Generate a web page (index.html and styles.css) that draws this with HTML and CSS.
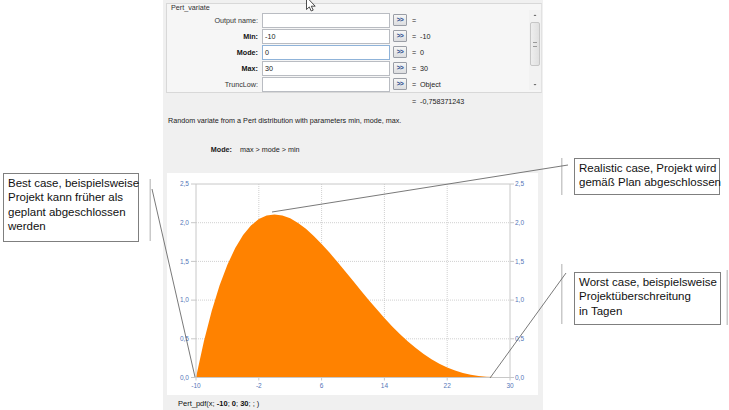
FILE: index.html
```html
<!DOCTYPE html>
<html lang="de">
<head>
<meta charset="utf-8">
<title>Pert_variate</title>
<link rel="stylesheet" href="styles.css">
</head>
<body>
<div class="page">
  <div class="panel">
    <div class="group">
      <div class="fields">
        <div class="group-title">Pert_variate</div>
        <div class="row"><span class="lbl">Output name:</span><span class="inp"></span><span class="btn">&gt;&gt;</span><span class="eq">=</span><span class="val"></span></div>
        <div class="row"><span class="lbl b">Min:</span><span class="inp">-10</span><span class="btn">&gt;&gt;</span><span class="eq">=</span><span class="val">-10</span></div>
        <div class="row"><span class="lbl b">Mode:</span><span class="inp focus">0</span><span class="btn">&gt;&gt;</span><span class="eq">=</span><span class="val">0</span></div>
        <div class="row"><span class="lbl b">Max:</span><span class="inp">30</span><span class="btn">&gt;&gt;</span><span class="eq">=</span><span class="val">30</span></div>
        <div class="row"><span class="lbl">TruncLow:</span><span class="inp"></span><span class="btn">&gt;&gt;</span><span class="eq">=</span><span class="val">Object</span></div>
      </div>
      <div class="scrollbar">
        <svg class="sb-arrow" width="12" height="10" viewBox="0 0 12 10"><path d="M4.5 6 L6 4.5 L7.5 6 Z" fill="#606060"/></svg>
        <div class="sb-thumb"><span class="grip"></span></div>
        <svg class="sb-arrow down" width="12" height="10" viewBox="0 0 12 10"><path d="M4.5 4 L6 5.5 L7.5 4 Z" fill="#606060"/></svg>
      </div>
    </div>
    <div class="result"><span class="eq">=</span><span>-0,758371243</span></div>
    <div class="desc">Random variate from a Pert distribution with parameters min, mode, max.</div>
    <div class="mode-row"><span class="mode-lbl">Mode:</span><span>max &gt; mode &gt; min</span></div>
    <div class="chart">
      <svg width="371" height="222" viewBox="0 0 371 222">
        <g class="grid">
          <line x1="91.8" y1="11" x2="91.8" y2="204.5"/>
          <line x1="154.6" y1="11" x2="154.6" y2="204.5"/>
          <line x1="217.4" y1="11" x2="217.4" y2="204.5"/>
          <line x1="280.2" y1="11" x2="280.2" y2="204.5"/>
          <line x1="29" y1="165.8" x2="343" y2="165.8"/>
          <line x1="29" y1="127.1" x2="343" y2="127.1"/>
          <line x1="29" y1="88.4" x2="343" y2="88.4"/>
          <line x1="29" y1="49.7" x2="343" y2="49.7"/>
        </g>
        <polygon class="area" points="29,204.5 36.85,168.5 44.7,138.1 52.55,112.6 60.4,91.7 68.25,75 76.1,62 83.95,52.5 91.8,46.1 99.65,42.5 107.5,41.4 115.35,42.4 123.2,45.3 131.05,49.9 138.9,55.8 146.75,62.9 154.6,70.9 162.45,79.6 170.3,88.7 178.15,98.2 186,107.8 193.85,117.4 201.7,126.9 209.55,136.1 217.4,145 225.25,153.4 233.1,161.2 240.95,168.5 248.8,175.1 256.65,181 264.5,186.2 272.35,190.7 280.2,194.4 288.05,197.5 295.9,199.9 303.75,201.7 311.6,202.9 319.45,203.7 327.3,204.1 335.15,204.4 343,204.5"/>
        <g class="axis">
          <line x1="29" y1="11" x2="343" y2="11"/>
          <line x1="29" y1="11" x2="29" y2="204.5"/>
          <line x1="343" y1="11" x2="343" y2="204.5"/>
          <line x1="29" y1="204.5" x2="343" y2="204.5"/>
        </g>
        <g class="ticks">
          <line x1="24" y1="11" x2="29" y2="11"/><line x1="24" y1="49.7" x2="29" y2="49.7"/><line x1="24" y1="88.4" x2="29" y2="88.4"/><line x1="24" y1="127.1" x2="29" y2="127.1"/><line x1="24" y1="165.8" x2="29" y2="165.8"/><line x1="24" y1="204.5" x2="29" y2="204.5"/>
          <line x1="343" y1="11" x2="347" y2="11"/><line x1="343" y1="49.7" x2="347" y2="49.7"/><line x1="343" y1="88.4" x2="347" y2="88.4"/><line x1="343" y1="127.1" x2="347" y2="127.1"/><line x1="343" y1="165.8" x2="347" y2="165.8"/><line x1="343" y1="204.5" x2="347" y2="204.5"/>
          <line x1="29" y1="204.5" x2="29" y2="207.5"/><line x1="91.8" y1="204.5" x2="91.8" y2="207.5"/><line x1="154.6" y1="204.5" x2="154.6" y2="207.5"/><line x1="217.4" y1="204.5" x2="217.4" y2="207.5"/><line x1="280.2" y1="204.5" x2="280.2" y2="207.5"/><line x1="343" y1="204.5" x2="343" y2="207.5"/>
        </g>
        <g class="ylab-l">
          <text x="22" y="13.3">2,5</text><text x="22" y="52">2,0</text><text x="22" y="90.7">1,5</text><text x="22" y="129.4">1,0</text><text x="22" y="168.1">0,5</text><text x="22" y="206.8">0,0</text>
        </g>
        <g class="ylab-r">
          <text x="348" y="13.3">2,5</text><text x="348" y="52">2,0</text><text x="348" y="90.7">1,5</text><text x="348" y="129.4">1,0</text><text x="348" y="168.1">0,5</text><text x="348" y="206.8">0,0</text>
        </g>
        <g class="xlab">
          <text x="29" y="214.5">-10</text><text x="91.8" y="214.5">-2</text><text x="154.6" y="214.5">6</text><text x="217.4" y="214.5">14</text><text x="280.2" y="214.5">22</text><text x="343" y="214.5">30</text>
        </g>
      </svg>
    </div>
    <div class="footer">Pert_pdf(x; <b>-10</b>; <b>0</b>; <b>30</b>; ; )</div>
  </div>
</div>

<svg class="overlay" width="729" height="410" viewBox="0 0 729 410">
  <rect class="bar" x="149.5" y="179" width="1.5" height="62"/>
  <rect class="bar" x="561" y="158" width="1.5" height="37"/>
  <rect class="bar" x="561" y="264" width="1.5" height="60"/>
  <rect class="bar" x="726.5" y="270" width="1.5" height="55"/>
  <line class="lead" x1="152" y1="189" x2="195" y2="377"/>
  <line class="lead" x1="568" y1="165" x2="272" y2="212"/>
  <line class="lead" x1="490" y1="378" x2="566" y2="273"/>
  <path class="cursor" d="M306.5 -3 L306.5 9.5 L309.3 6.9 L311.2 11 L313.2 10.1 L311.3 6.2 L315.2 6.2 Z"/>
</svg>

<div class="callout c1">Best case, beispielsweise<br>Projekt kann früher als<br>geplant abgeschlossen<br>werden</div>
<div class="callout c2">Realistic case, Projekt wird<br>gemäß Plan abgeschlossen</div>
<div class="callout c3">Worst case, beispielsweise<br>Projektüberschreitung<br>in Tagen</div>
</body>
</html>
```

FILE: styles.css
```css
html, body {
  margin: 0;
  padding: 0;
  background: #ffffff;
}
body {
  width: 729px;
  height: 410px;
  overflow: hidden;
  position: relative;
  font-family: "Liberation Sans", Arial, sans-serif;
}
.page {
  display: flex;
  height: 410px;
}
.panel {
  margin-left: 163px;
  width: 380px;
  height: 410px;
  background: #f0f0f0;
  display: flex;
  flex-direction: column;
  font-size: 7.2px;
  color: #1a1a1a;
}
.group {
  margin: 3px 1px 0 3px;
  height: 90px;
  box-sizing: border-box;
  border: 1px solid #d8d8d8;
  border-right-color: #e2e2e2;
  background: #f6f6f6;
  display: flex;
}
.fields {
  flex: 1;
  display: flex;
  flex-direction: column;
}
.group-title {
  height: 8px;
  line-height: 8px;
  padding-left: 4px;
  color: #303030;
}
.row {
  height: 16px;
  display: flex;
  align-items: center;
}
.lbl {
  width: 91px;
  text-align: right;
  color: #333;
}
.lbl.b { font-weight: bold; color: #111; }
.inp {
  margin-left: 4px;
  width: 128px;
  height: 15px;
  box-sizing: border-box;
  border: 1px solid #b9bcc2;
  background: #ffffff;
  padding-left: 2px;
  line-height: 13px;
  color: #222;
}
.inp.focus { border-color: #8fb3d9; }
.btn {
  margin-left: 3px;
  width: 14px;
  height: 12px;
  box-sizing: border-box;
  border: 1px solid #9a9ea6;
  border-radius: 1px;
  background: linear-gradient(#f6f6f6, #dcdde0);
  color: #2f4f8f;
  font-size: 6.5px;
  font-weight: bold;
  line-height: 10px;
  text-align: center;
  letter-spacing: -0.5px;
}
.eq { margin-left: 5px; width: 8px; }
.val { color: #222; }
.scrollbar {
  width: 12px;
  margin: 6px 0 2px 0;
  display: flex;
  flex-direction: column;
  background: #f2f2f2;
}
.sb-arrow { display: block; }
.sb-thumb {
  margin: 2px 1px 0 1px;
  height: 44px;
  box-sizing: border-box;
  border: 1px solid #c6c6c6;
  border-radius: 2px;
  background: linear-gradient(90deg, #eeeeee, #e0e0e0);
  display: flex;
  align-items: center;
  justify-content: center;
}
.grip {
  width: 4px;
  height: 5px;
  border-top: 1px solid #9a9a9a;
  border-bottom: 1px solid #9a9a9a;
  box-sizing: border-box;
}
.sb-arrow.down { margin-top: auto; }
.result {
  margin-top: 4px;
  height: 9px;
  line-height: 9px;
  padding-left: 249px;
  display: flex;
}
.result .eq { margin-left: 0; }
.desc {
  margin-top: 10px;
  height: 9px;
  line-height: 9px;
  padding-left: 5px;
}
.mode-row {
  margin-top: 20px;
  height: 9px;
  line-height: 9px;
  display: flex;
}
.mode-lbl {
  width: 69px;
  text-align: right;
  font-weight: bold;
  margin-right: 8px;
}
.chart {
  margin: 19px 5px 0 4px;
  width: 371px;
  height: 222px;
  background: #ffffff;
}
.chart svg { display: block; }
.grid line {
  stroke: #c4c4c4;
  stroke-width: 0.8;
  stroke-dasharray: 1 1;
}
.axis line, .ticks line {
  stroke: #c8c8c8;
  stroke-width: 1;
}
.area { fill: #ff8200; }
.ylab-l text, .ylab-r text, .xlab text {
  font-family: "Liberation Sans", Arial, sans-serif;
  font-size: 6.5px;
  fill: #5576b8;
}
.ylab-l text { text-anchor: end; }
.xlab text { text-anchor: middle; }
.footer {
  margin-top: 4px;
  padding-left: 15px;
  font-size: 7.5px;
  line-height: 9px;
  color: #111;
}
.footer b { font-weight: bold; }
.overlay {
  position: absolute;
  left: 0;
  top: 0;
  pointer-events: none;
}
.bar { fill: #c9c9c9; }
.lead {
  stroke: #6a6a6a;
  stroke-width: 0.9;
}
.cursor {
  fill: #ffffff;
  stroke: #222222;
  stroke-width: 0.8;
}
.callout {
  position: absolute;
  box-sizing: border-box;
  border: 1px solid #7f7f7f;
  background: #ffffff;
  font-family: "Liberation Sans", Arial, sans-serif;
  font-size: 11.5px;
  line-height: 14.4px;
  color: #111;
  padding: 2px 0 0 4px;
  white-space: nowrap;
}
.c1 { left: 3px; top: 173px; width: 136px; height: 69px; }
.c2 { left: 574px; top: 158px; width: 146px; height: 37px; }
.c3 { left: 574px; top: 272px; width: 147px; height: 53px; }
```
